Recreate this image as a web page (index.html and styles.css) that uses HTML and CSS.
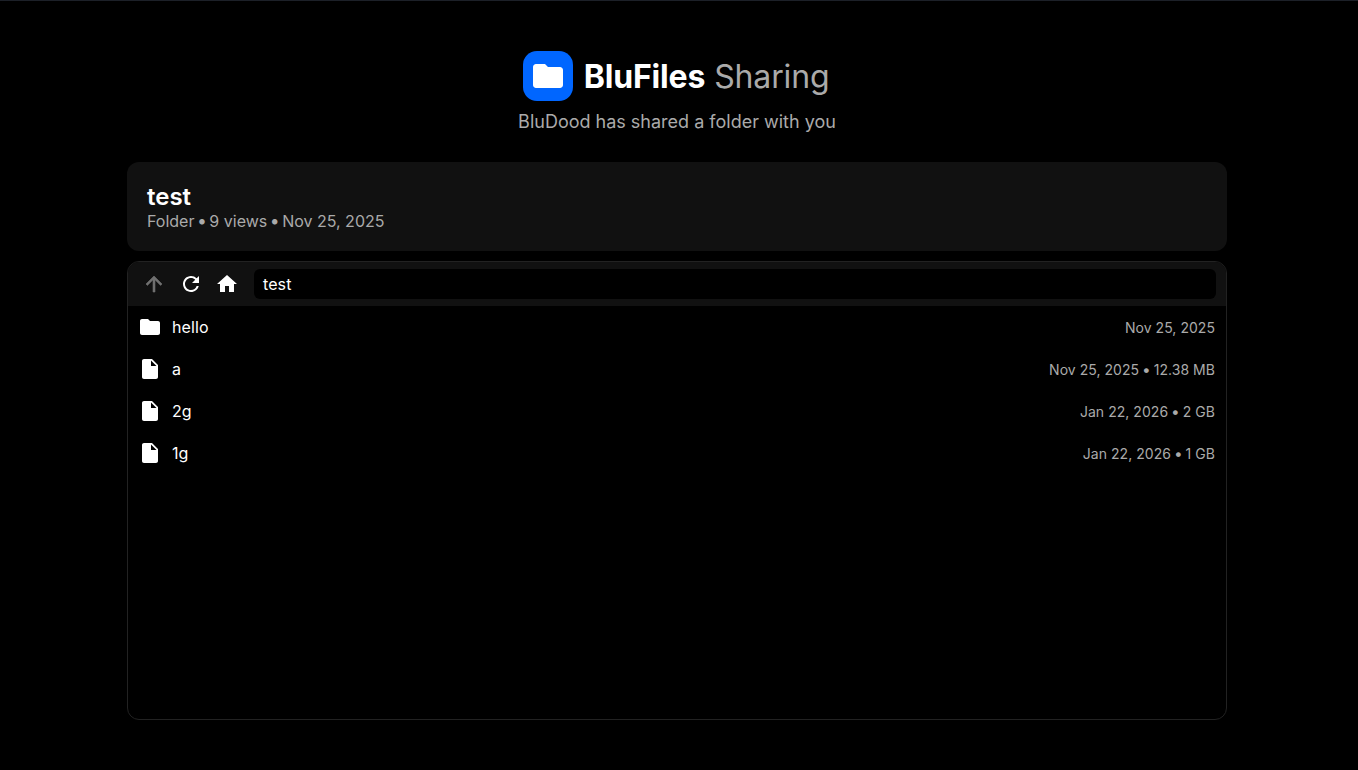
FILE: index.html
```html
<!DOCTYPE html>
<html lang="en">
<head>
<meta charset="utf-8">
<title>BluFiles Sharing</title>
<link rel="stylesheet" href="styles.css">
</head>
<body>
<div class="page">
  <header class="header">
    <div class="brand">
      <div class="logo">
        <svg viewBox="0 0 24 24" width="36" height="36"><path fill="#fff" d="M10 4H4c-1.1 0-1.99.9-1.99 2L2 18c0 1.1.9 2 2 2h16c1.1 0 2-.9 2-2V8c0-1.1-.9-2-2-2h-8l-2-2z"/></svg>
      </div>
      <h1 class="title"><strong>BluFiles</strong> <span>Sharing</span></h1>
    </div>
    <p class="subtitle">BluDood has shared a folder with you</p>
  </header>
  <section class="card">
    <h2 class="name">test</h2>
    <p class="meta">Folder <span class="dot">•</span> 9 views <span class="dot">•</span> Nov 25, 2025</p>
  </section>
  <section class="browser">
    <div class="toolbar">
      <button class="tool dim"><svg viewBox="0 0 24 24" width="24" height="24"><path fill="currentColor" stroke="currentColor" stroke-width="0.6" d="M4 12l1.41 1.41L11 7.83V20h2V7.83l5.58 5.59L20 12l-8-8-8 8z"/></svg></button>
      <button class="tool"><svg viewBox="0 0 24 24" width="24" height="24"><path fill="currentColor" d="M17.65 6.35A7.958 7.958 0 0 0 12 4c-4.42 0-7.99 3.58-7.99 8s3.57 8 7.99 8c3.73 0 6.84-2.55 7.73-6h-2.08A5.99 5.99 0 0 1 12 18c-3.31 0-6-2.69-6-6s2.69-6 6-6c1.66 0 3.14.69 4.22 1.78L13 11h7V4l-2.35 2.35z"/></svg></button>
      <button class="tool"><svg viewBox="0 0 24 24" width="24" height="24"><path fill="currentColor" d="M10 20v-6h4v6h5v-8h3L12 3 2 12h3v8z"/></svg></button>
      <div class="path">test</div>
    </div>
    <ul class="list">
      <li class="row"><svg class="icon" viewBox="0 0 24 24" width="24" height="24"><path fill="#fff" d="M10 4H4c-1.1 0-1.99.9-1.99 2L2 18c0 1.1.9 2 2 2h16c1.1 0 2-.9 2-2V8c0-1.1-.9-2-2-2h-8l-2-2z"/></svg><span class="file">hello</span><span class="info">Nov 25, 2025</span></li>
      <li class="row"><svg class="icon" viewBox="0 0 24 24" width="24" height="24"><path fill="#fff" d="M6 2c-1.1 0-1.99.9-1.99 2L4 20c0 1.1.89 2 1.99 2H18c1.1 0 2-.9 2-2V8l-6-6H6zm7 7V3.5L18.5 9H13z"/></svg><span class="file">a</span><span class="info">Nov 25, 2025 <span class="dot-sm">•</span> 12.38 MB</span></li>
      <li class="row"><svg class="icon" viewBox="0 0 24 24" width="24" height="24"><path fill="#fff" d="M6 2c-1.1 0-1.99.9-1.99 2L4 20c0 1.1.89 2 1.99 2H18c1.1 0 2-.9 2-2V8l-6-6H6zm7 7V3.5L18.5 9H13z"/></svg><span class="file">2g</span><span class="info">Jan 22, 2026 <span class="dot-sm">•</span> 2 GB</span></li>
      <li class="row"><svg class="icon" viewBox="0 0 24 24" width="24" height="24"><path fill="#fff" d="M6 2c-1.1 0-1.99.9-1.99 2L4 20c0 1.1.89 2 1.99 2H18c1.1 0 2-.9 2-2V8l-6-6H6zm7 7V3.5L18.5 9H13z"/></svg><span class="file">1g</span><span class="info">Jan 22, 2026 <span class="dot-sm">•</span> 1 GB</span></li>
    </ul>
  </section>
</div>
</body>
</html>
```
FILE: styles.css
```css
* { box-sizing: border-box; }
html, body { height: 100%; }
body {
  margin: 0;
  padding-right: 4px;
  background: #000;
  color: #fff;
  font-family: Inter, "Noto Sans", sans-serif;
  border-top: 1px solid #1c2028;
}
.page {
  width: 1100px;
  height: 769px;
  margin: 0 auto;
  padding: 50px 0;
  display: flex;
  flex-direction: column;
}
.header {
  display: flex;
  flex-direction: column;
  align-items: center;
  gap: 10px;
  margin-bottom: 29px;
}
.brand { display: flex; align-items: center; gap: 11px; margin-right: 2px; }
.logo {
  width: 50px;
  height: 50px;
  border-radius: 14px;
  background: #06f;
  display: flex;
  align-items: center;
  justify-content: center;
}
.title { margin: 0; font-size: 32px; line-height: 39px; font-weight: 400; color: #aaa; letter-spacing: -0.15px; }
.title strong { color: #fff; font-weight: 700; }
.subtitle { margin: 0; font-size: 18px; line-height: 22px; color: #aaa; }
.card {
  background: #111;
  border-radius: 12px;
  padding: 20px 20px 0;
  height: 89px;
  margin-bottom: 10px;
}
.name { margin: 0; font-size: 24px; line-height: 29px; font-weight: 600; }
.meta { margin: 1px 0 0; font-size: 16px; line-height: 19px; color: #aaa; }
.dot { font-size: 1.1em; line-height: 1; margin: 0 -2px; }
.dot-sm { font-size: 1.1em; line-height: 1; margin: 0 -1px; }
.browser {
  flex: 1;
  border: 1px solid #222;
  border-radius: 12px;
  overflow: hidden;
  display: flex;
  flex-direction: column;
}
.toolbar {
  background: #111;
  height: 44px;
  padding: 7px 10px 7px 14px;
  display: flex;
  align-items: center;
  gap: 12.5px;
}
.tool {
  width: 24px;
  height: 24px;
  padding: 0;
  border: 0;
  background: none;
  color: #fff;
  display: flex;
}
.tool.dim { color: #707070; }
.path {
  flex: 1;
  height: 30px;
  margin-left: 2.5px;
  background: #000;
  border-radius: 6px;
  padding: 0 9px;
  font-size: 16px;
  line-height: 30px;
  letter-spacing: 0.1px;
}
.list { list-style: none; margin: 0; padding: 0; }
.row {
  height: 42px;
  display: flex;
  align-items: center;
  gap: 9.75px;
  padding: 0 11px 0 10.25px;
}
.file { flex: 1; font-size: 16px; letter-spacing: 0.1px; }
.info { font-size: 14px; color: #aaa; letter-spacing: 0.04px; }
```
